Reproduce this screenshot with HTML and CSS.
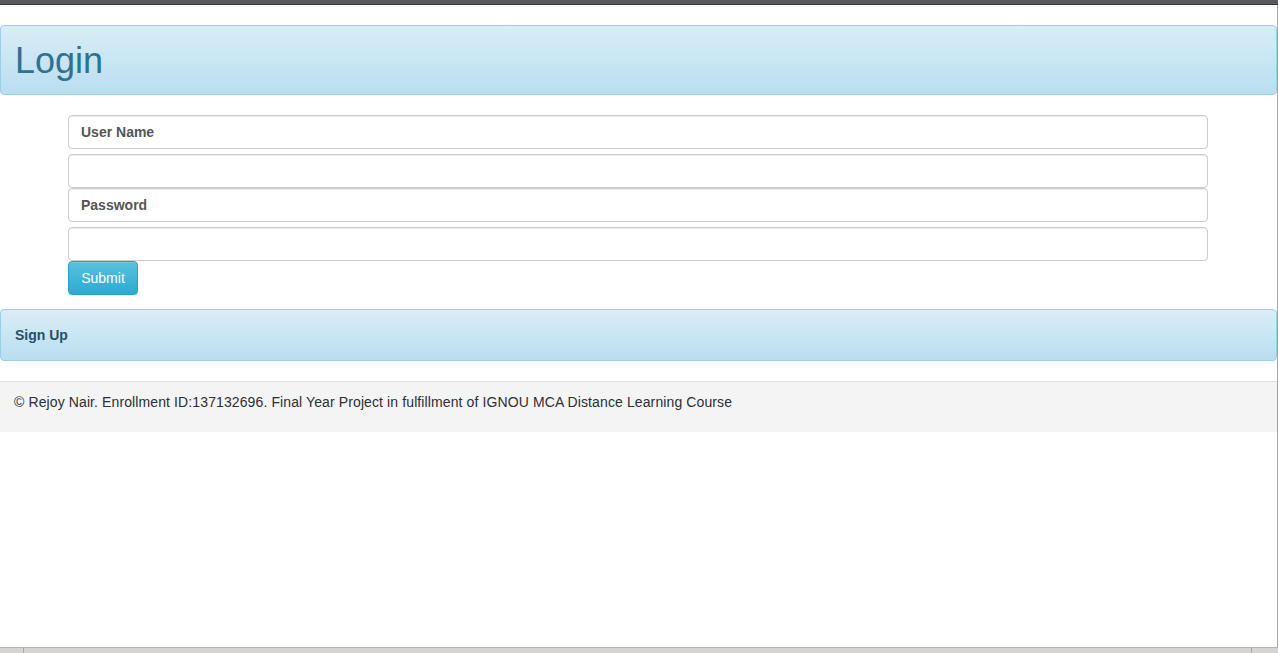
FILE: index.html
```html
<!DOCTYPE html>
<html>
<head>
<meta charset="utf-8">
<link rel="stylesheet" href="styles.css">
</head>
<body>
<div class="topbar"></div>
<div class="frame">
  <div class="page">
    <div class="panel panel-login">
      <h1 class="panel-title-lg">Login</h1>
    </div>
    <form class="form">
      <label class="field label">User Name</label>
      <input class="field input gap" type="text">
      <label class="field label">Password</label>
      <input class="field input gap" type="password">
      <button class="btn" type="button">Submit</button>
    </form>
    <div class="panel panel-signup">
      <span class="signup">Sign Up</span>
    </div>
    <footer class="footer">© Rejoy Nair. Enrollment ID:137132696. Final Year Project in fulfillment of IGNOU MCA Distance Learning Course</footer>
  </div>
  <div class="rightedge"></div>
</div>
<div class="statusbar">
  <div class="seg seg1"></div>
  <div class="seg seg2"></div>
  <div class="seg seg3"></div>
</div>
</body>
</html>
```
FILE: styles.css
```css
* { box-sizing: border-box; }
html, body { margin: 0; padding: 0; height: 100%; }
body {
  font-family: "Liberation Sans", Arial, sans-serif;
  font-size: 14px;
  color: #333;
  background: #fff;
  display: flex;
  flex-direction: column;
  overflow: hidden;
}
.topbar {
  height: 5px;
  background: #5a5a5e;
  border-bottom: 1px solid #3a3a3a;
  flex: none;
}
.frame {
  flex: 1;
  display: flex;
  min-height: 0;
}
.page {
  flex: 1;
  padding-top: 20px;
}
.rightedge {
  width: 1px;
  background: #a4a4a4;
  flex: none;
}
.panel {
  border: 1px solid #9acfea;
  border-radius: 4px;
  background: linear-gradient(to bottom, #d9edf7 0%, #b9def0 100%);
}
.panel-login {
  height: 70px;
  padding: 0 14px;
  display: flex;
  align-items: center;
}
.panel-title-lg {
  margin: 0;
  font-weight: 400;
  font-size: 36px;
  color: #31708f;
  line-height: 1;
  padding-top: 1px;
}
.form {
  width: 1140px;
  margin: 20px 0 14px 68px;
  display: flex;
  flex-direction: column;
  align-items: flex-start;
}
.field {
  width: 1140px;
  height: 34px;
  border: 1px solid #ccc;
  border-radius: 4px;
  background: #fff;
  font-family: inherit;
  font-size: 14px;
  box-shadow: inset 0 1px 1px rgba(0,0,0,0.075);
}
.label {
  display: flex;
  align-items: center;
  padding: 0 12px;
  font-weight: 700;
  color: #555;
}
.gap { margin-top: 5px; }
.input { padding: 6px 12px; display: block; }
.btn {
  height: 34px;
  width: 70px;
  border: 1px solid #28a4c9;
  border-radius: 4px;
  background: linear-gradient(to bottom, #5bc0de 0%, #2aabd2 100%);
  color: #fff;
  font-family: inherit;
  font-size: 14px;
  padding: 0;
  box-shadow: inset 0 1px 0 rgba(255,255,255,0.15), 0 1px 1px rgba(0,0,0,0.075);
}
.panel-signup {
  height: 52px;
  padding: 0 14px;
  display: flex;
  align-items: center;
}
.signup {
  font-weight: 700;
  font-size: 14px;
  color: #245269;
}
.footer {
  margin-top: 20px;
  height: 51px;
  background: #f4f4f4;
  border-top: 1px solid #e0e0e0;
  padding: 11px 14px;
  color: #2b2f36;
  font-size: 14px;
  letter-spacing: 0.11px;
  line-height: 18px;
}
.statusbar {
  height: 6px;
  flex: none;
  display: flex;
  background: #d6d4d2;
  border-top: 1px solid #b4b4b4;
}
.seg { height: 100%; }
.seg1 { width: 24px; border-right: 1px solid #a8a8a8; }
.seg2 { flex: 1; border-right: 1px solid #a8a8a8; }
.seg3 { width: 26px; }
```
